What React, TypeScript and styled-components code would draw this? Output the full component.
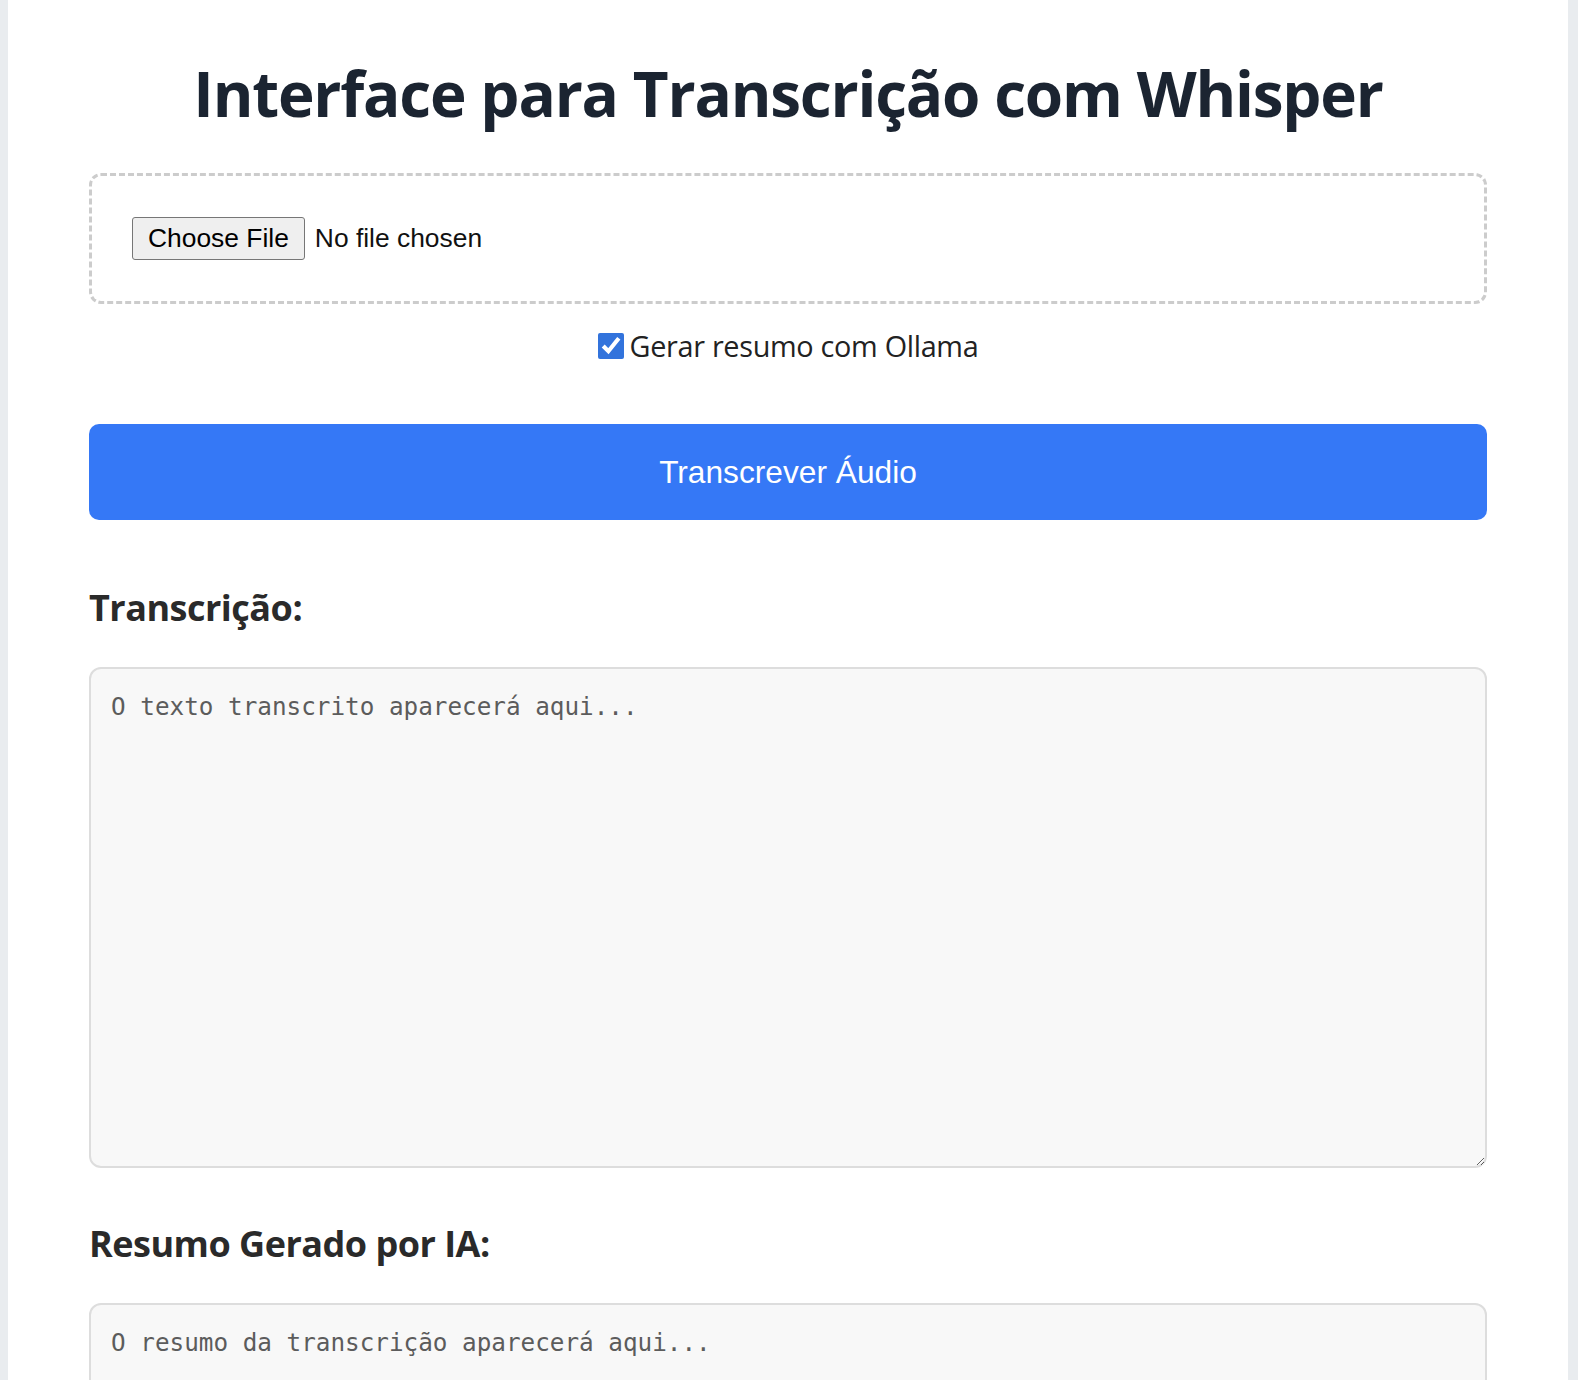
import React from 'react'
import styled, { createGlobalStyle } from 'styled-components'

const GlobalStyle = createGlobalStyle`
  html, body {
    margin: 0;
    padding: 0;
  }
  body {
    background: #e9ecef;
    padding: 0 10px 0 8px;
    font-family: "Open Sans", "Noto Sans", sans-serif;
    color: #222;
  }
`

const Page = styled.div`
  background: #ffffff;
  min-height: 1380px;
  padding: 55px 81px 40px 81px;
  box-sizing: border-box;
`

const Title = styled.h1`
  margin: 0 0 42px 0;
  text-align: center;
  font-size: 62px;
  letter-spacing: -1.2px;
  line-height: 76px;
  font-weight: 700;
  color: #1b2431;
`

const DropZone = styled.div`
  border: 3px dashed #cccccc;
  border-radius: 12px;
  padding: 41px 40px;
  display: flex;
  align-items: center;
`

const FileInput = styled.input`
  font-family: "Liberation Sans", Arial, sans-serif;
  font-size: 26.4px;
  color: #111;

  &::file-selector-button {
    font-family: "Liberation Sans", Arial, sans-serif;
    font-size: 26.4px;
    padding: 5px 15px;
    margin-right: 10px;
    background: #efefef;
    border: 1px solid #767676;
    border-radius: 3px;
    color: #000;
  }
`

const CheckRow = styled.label`
  margin: 22px auto 0 auto;
  display: flex;
  align-items: center;
  justify-content: center;
  gap: 6px;
  font-size: 28.8px;
  letter-spacing: -0.3px;
  color: #222;
`

const CheckBox = styled.input`
  width: 26px;
  height: 26px;
  margin: 0;
  accent-color: #3273dc;
`

const PrimaryButton = styled.button`
  display: block;
  width: 100%;
  height: 96px;
  margin-top: 59px;
  border: none;
  border-radius: 10px;
  background: #3578f6;
  color: #ffffff;
  font-family: "Liberation Sans", Arial, sans-serif;
  font-size: 31.7px;
  cursor: pointer;
`

const SectionTitle = styled.h2<{ $top: number }>`
  margin: ${p => p.$top}px 0 34px 0;
  font-size: 36px;
  letter-spacing: -0.5px;
  font-weight: 700;
  line-height: 51px;
  color: #2a2a2a;
`

const Output = styled.textarea<{ $height: number }>`
  display: block;
  width: 100%;
  height: ${p => p.$height}px;
  box-sizing: border-box;
  padding: 20px;
  border: 2px solid #dddddd;
  border-radius: 12px;
  background: #f8f8f8;
  font-family: "DejaVu Sans Mono", monospace;
  font-size: 24.3px;
  line-height: 1.5;
  color: #333;

  &::placeholder {
    color: #5c5c5c;
  }
`

export default function App() {
  return (
    <>
      <GlobalStyle />
      <Page>
        <Title>Interface para Transcrição com Whisper</Title>
        <DropZone>
          <FileInput type="file" accept="audio/*" />
        </DropZone>
        <CheckRow>
          <CheckBox type="checkbox" defaultChecked />
          Gerar resumo com Ollama
        </CheckRow>
        <PrimaryButton>Transcrever Áudio</PrimaryButton>

        <SectionTitle $top={62}>Transcrição:</SectionTitle>
        <Output $height={501} placeholder="O texto transcrito aparecerá aqui..." readOnly />

        <SectionTitle $top={50}>Resumo Gerado por IA:</SectionTitle>
        <Output $height={300} placeholder="O resumo da transcrição aparecerá aqui..." readOnly />
      </Page>
    </>
  )
}
